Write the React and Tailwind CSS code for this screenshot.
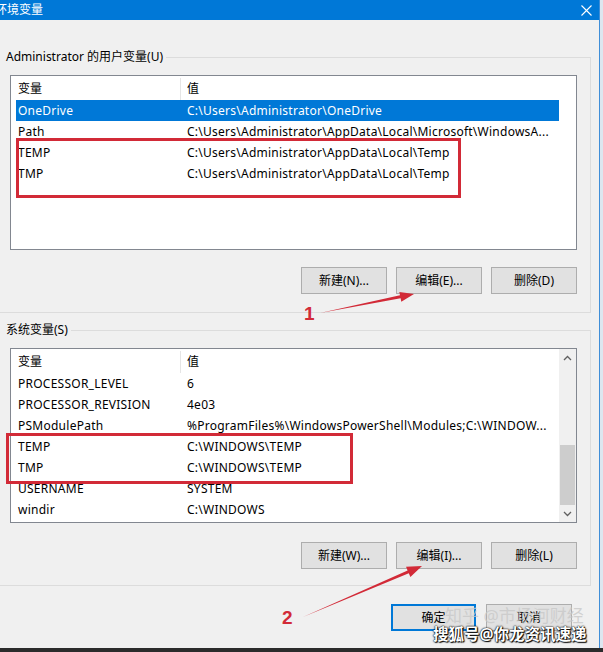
import React from 'react'

const userVars = [
  { name: 'OneDrive', value: 'C:\\Users\\Administrator\\OneDrive', selected: true },
  { name: 'Path', value: 'C:\\Users\\Administrator\\AppData\\Local\\Microsoft\\WindowsA...' },
  { name: 'TEMP', value: 'C:\\Users\\Administrator\\AppData\\Local\\Temp' },
  { name: 'TMP', value: 'C:\\Users\\Administrator\\AppData\\Local\\Temp' },
]

const sysVars = [
  { name: 'PROCESSOR_LEVEL', value: '6' },
  { name: 'PROCESSOR_REVISION', value: '4e03' },
  { name: 'PSModulePath', value: '%ProgramFiles%\\WindowsPowerShell\\Modules;C:\\WINDOW...' },
  { name: 'TEMP', value: 'C:\\WINDOWS\\TEMP' },
  { name: 'TMP', value: 'C:\\WINDOWS\\TEMP' },
  { name: 'USERNAME', value: 'SYSTEM' },
  { name: 'windir', value: 'C:\\WINDOWS' },
]

function HeaderRow() {
  return (
    <div className="flex h-[24px] items-center ml-[5px] w-[543px] pt-[1px]">
      <span className="w-[164px] pl-[2px]">变量</span>
      <span className="w-px h-[22px] bg-[#e5e5e5]" />
      <span className="pl-[6px]">值</span>
    </div>
  )
}

function Row({ name, value, selected }) {
  return (
    <div
      className={
        'flex h-[21px] items-center ml-[5px] w-[543px] tracking-[0.25px] ' +
        (selected ? 'bg-[#0078d7] text-white' : 'text-black')
      }
    >
      <span className="w-[171px] pl-[2px] whitespace-nowrap">{name}</span>
      <span className="whitespace-nowrap">{value}</span>
    </div>
  )
}

function Button({ children, width = 'w-[86px]', primary }) {
  return (
    <div
      className={
        width +
        ' h-[27px] flex items-center justify-center bg-[#e1e1e1] ' +
        (primary ? 'border-2 border-[#0078d7]' : 'border border-[#adadad]')
      }
    >
      {children}
    </div>
  )
}

function GroupBox({ label, children }) {
  return (
    <div className="ml-[-1px] w-[592px]">
      <div className="flex items-center h-[16px]">
        <span className="pl-[7px] pr-[3px] whitespace-nowrap">{label}</span>
        <div className="flex-1 h-[8px] self-end border-t border-r border-[#dcdcdc]" />
      </div>
      {children}
    </div>
  )
}

function Chevron({ up }) {
  return (
    <svg width="9" height="6" viewBox="0 0 9 6">
      <polyline
        points={up ? '1,5 4.5,1.5 8,5' : '1,1 4.5,4.5 8,1'}
        fill="none"
        stroke="#606060"
        strokeWidth="1.3"
      />
    </svg>
  )
}

export default function App() {
  return (
    <div className="w-[603px] h-[652px] overflow-hidden relative flex flex-col bg-[#f0f0f0] text-[12px] leading-[16px] text-black font-['Noto_Sans','Noto_Sans_CJK_SC',sans-serif]">
      <div className="flex h-[648px]">
        <div className="w-[600px] border-r border-[#3f8ed8] flex flex-col">
          {/* title bar */}
          <div className="h-[20px] bg-[#0078d7] flex items-center justify-between text-white">
            <span className="ml-[-5px]">环境变量</span>
            <svg className="mr-[7px]" width="11" height="11" viewBox="0 0 11 11">
              <path d="M0.5 0.5 L10.5 10.5 M10.5 0.5 L0.5 10.5" stroke="#fff" strokeWidth="1.1" />
            </svg>
          </div>

          {/* user variables */}
          <div className="mt-[29px]">
            <GroupBox label="Administrator 的用户变量(U)">
              <div className="border-r border-b border-[#dcdcdc] pl-[11px] pt-[10px] pb-[18px]">
                <div className="w-[567px] h-[175px] border border-[#828790] bg-white">
                  <HeaderRow />
                  {userVars.map((v) => (
                    <Row key={v.name} {...v} />
                  ))}
                </div>
                <div className="flex gap-[9px] ml-[291px] mt-[17px]">
                  <Button>新建(N)...</Button>
                  <Button>编辑(E)...</Button>
                  <Button>删除(D)</Button>
                </div>
              </div>
            </GroupBox>
          </div>

          {/* system variables */}
          <div className="mt-[9px]">
            <GroupBox label="系统变量(S)">
              <div className="border-r border-b border-[#dcdcdc] pl-[11px] pt-[10px] pb-[16px]">
                <div className="w-[567px] h-[175px] border border-[#828790] bg-white flex">
                  <div className="flex-1">
                    <HeaderRow />
                    {sysVars.map((v) => (
                      <Row key={v.name + v.value} {...v} />
                    ))}
                  </div>
                  <div className="w-[17px] flex flex-col bg-[#f0f0f0]">
                    <div className="h-[17px] flex items-center justify-center">
                      <Chevron up />
                    </div>
                    <div className="flex-1 flex flex-col">
                      <div className="mt-[79px] h-[60px] mx-[1px] bg-[#cdcdcd]" />
                    </div>
                    <div className="h-[16px] flex items-center justify-center">
                      <Chevron />
                    </div>
                  </div>
                </div>
                <div className="flex gap-[9px] ml-[291px] mt-[19px]">
                  <Button>新建(W)...</Button>
                  <Button>编辑(I)...</Button>
                  <Button>删除(L)</Button>
                </div>
              </div>
            </GroupBox>
          </div>

          {/* OK / Cancel */}
          <div className="flex gap-[10px] ml-[391px] mt-[18px]">
            <Button width="w-[85px]" primary>确定</Button>
            <Button width="w-[86px]">取消</Button>
          </div>
        </div>
        <div className="flex-1 bg-[#dde6ef]" />
      </div>
      <div className="h-[4px] bg-[#2b2b2b]" />

      {/* annotations */}
      <svg className="absolute inset-0 pointer-events-none" width="603" height="652">
        <rect x="17.5" y="139.5" width="442" height="57" fill="none" stroke="#d22a37" strokeWidth="3" />
        <rect x="7.5" y="434.5" width="344" height="48" fill="none" stroke="#d22a37" strokeWidth="3" />
        <polygon points="320,313 400.0,295.3 399.3,291.9 414,294 401.3,301.7 400.6,298.3" fill="#d22a37" />
        <polygon points="303,617 407.6,570.5 406.0,566.8 422,566 410.4,577.0 408.8,573.3" fill="#d22a37" />
      </svg>
      <span className="absolute left-[304px] top-[304px] text-[19px] leading-[20px] font-bold text-[#d22a37] font-['Liberation_Sans',sans-serif]">
        1
      </span>
      <span className="absolute left-[282px] top-[608px] text-[19px] leading-[20px] font-bold text-[#d22a37] font-['Liberation_Sans',sans-serif]">
        2
      </span>

      {/* watermarks */}
      <span className="absolute left-[445px] top-[606px] text-[17px] leading-[20px] text-[#c8c8c8]/80 whitespace-nowrap">
        知乎 @市场河财经
      </span>
      <span className="absolute left-[433px] top-[625px] text-[15.5px] leading-[18px] font-bold text-white whitespace-nowrap [text-shadow:0_0_2px_#000,0_0_1px_#000,1px_1px_1px_#000]">
        搜狐号@你龙资讯速递
      </span>
    </div>
  )
}
